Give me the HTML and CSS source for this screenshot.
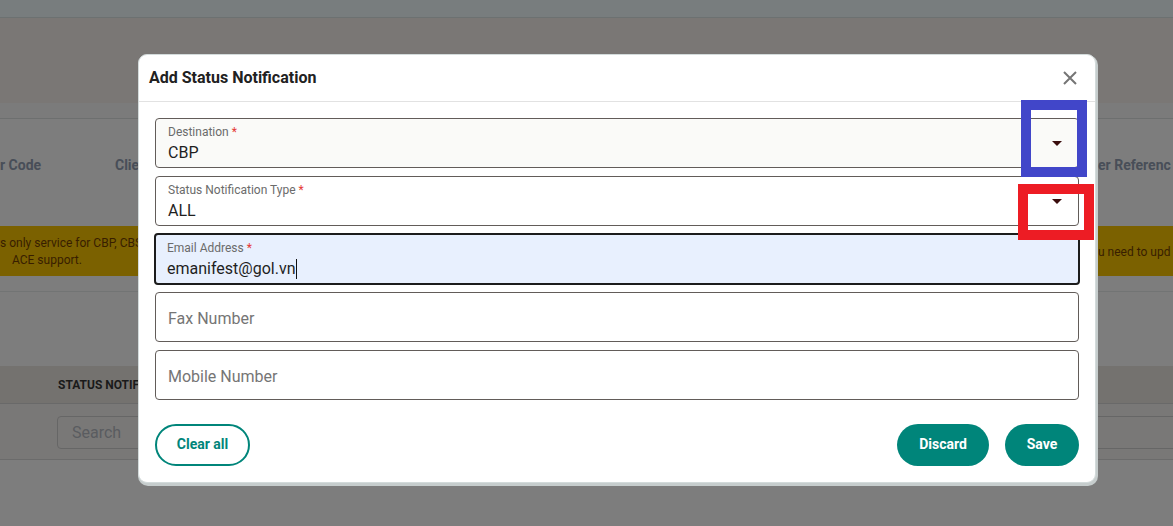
FILE: index.html
```html
<!DOCTYPE html>
<html lang="en">
<head>
<meta charset="utf-8">
<title>Add Status Notification</title>
<link rel="stylesheet" href="styles.css">
</head>
<body>
<div class="page">
  <div class="topbar"></div>
  <div class="band"></div>
  <div class="subband"></div>
  <div class="filters">
    <span class="col col-a">r Code</span>
    <span class="col col-b">Client</span>
    <span class="col col-c">er Referenc</span>
  </div>
  <div class="notice">
    <div class="notice-left">
      <div>s only service for CBP, CBSA</div>
      <div class="indent">ACE support.</div>
    </div>
    <div class="notice-right">u need to upd</div>
  </div>
  <div class="spacer"></div>
  <div class="thead"><span class="th">STATUS NOTIFICATION</span></div>
  <div class="searchrow"><div class="search">Search</div></div>
  <div class="rest"></div>
</div>

<div class="modal">
  <div class="modal-head">
    <h2 class="modal-title">Add Status Notification</h2>
    <svg class="close" width="14" height="14" viewBox="0 0 14 14"><path d="M1 1 L13 13 M13 1 L1 13" stroke="#757575" stroke-width="2" fill="none"/></svg>
  </div>
  <div class="modal-body">
    <div class="field select filled-bg">
      <div class="field-text">
        <div class="label">Destination <span class="req">*</span></div>
        <div class="value">CBP</div>
      </div>
      <span class="caret-down"></span>
    </div>
    <div class="field select">
      <div class="field-text">
        <div class="label">Status Notification Type <span class="req">*</span></div>
        <div class="value">ALL</div>
      </div>
      <span class="caret-down"></span>
    </div>
    <div class="field focused">
      <div class="field-text">
        <div class="label">Email Address <span class="req">*</span></div>
        <div class="value">emanifest@gol.vn<span class="cursor"></span></div>
      </div>
    </div>
    <div class="field empty">
      <div class="placeholder">Fax Number</div>
    </div>
    <div class="field empty">
      <div class="placeholder">Mobile Number</div>
    </div>
    <div class="actions">
      <button class="btn outline">Clear all</button>
      <div class="right-actions">
        <button class="btn solid discard">Discard</button>
        <button class="btn solid save">Save</button>
      </div>
    </div>
  </div>
</div>

<div class="mark mark-blue"></div>
<div class="mark mark-red"></div>
</body>
</html>
```

FILE: styles.css
```css
* { box-sizing: border-box; }
html, body { margin: 0; padding: 0; }
body {
  width: 1173px;
  height: 526px;
  overflow: hidden;
  background: #7d7d7d;
  font-family: Roboto, "Liberation Sans", sans-serif;
}
.page { display: flex; flex-direction: column; }
.topbar { height: 18px; background: #787d7e; border-bottom: 1px solid #6c7171; }
.band { height: 85px; background: #7a7775; }
.subband { height: 16px; background: #7b7b7b; border-bottom: 1px solid #6d6f6f; }
.filters {
  height: 107px;
  display: flex;
  align-items: center;
  padding-bottom: 15px;
  background: #7d7d7d;
  font-size: 14px;
  font-weight: 700;
  color: #484e58;
  white-space: nowrap;
}
.col-a { width: 115px; }
.col-b { width: 983px; }
.notice {
  height: 50px;
  background: #7b6100;
  display: flex;
  justify-content: space-between;
  align-items: center;
  font-size: 12px;
  line-height: 17px;
  color: #381e00;
  white-space: nowrap;
  padding-top: 2px;
}
.notice-left .indent { padding-left: 12px; }
.notice-right { margin-left: auto; width: 75px; }
.spacer { height: 75px; border-top: 1px solid #727474; margin-top: 15px; }
.thead {
  height: 38px;
  background: #74726f;
  border-bottom: 1px solid #696969;
  display: flex;
  align-items: center;
  padding-left: 58px;
  font-size: 12px;
  font-weight: 700;
  color: #1a1a1a;
}
.searchrow {
  height: 56px;
  background: #797877;
  border-bottom: 1px solid #6b6b6b;
  padding: 12px 0 0 57px;
}
.search {
  height: 33px;
  width: 1200px;
  border: 1px solid #666;
  border-radius: 4px;
  padding-left: 14px;
  font-size: 16px;
  line-height: 31px;
  color: #5a5c60;
}
.rest { flex: 1; }

/* Modal */
.modal {
  position: absolute;
  left: 138px;
  top: 54px;
  width: 958px;
  height: 429px;
  background: #fff;
  border-radius: 9px;
  border: 1px solid #d3dbdb;
  box-shadow: 1px 2px 0 1px #c6cdcd;
  display: flex;
  flex-direction: column;
}
.modal-head {
  height: 47px;
  border-bottom: 1px solid #e2e2e2;
  display: flex;
  align-items: center;
  justify-content: space-between;
  padding: 0 18px 1px 10px;
}
.modal-title {
  margin: 0;
  font-size: 16px;
  font-weight: 700;
  color: #212121;
}
.close { display: block; margin-top: 1px; }
.modal-body {
  padding: 16px 16px 0 16px;
  display: flex;
  flex-direction: column;
  gap: 8px;
}
.field {
  height: 50px;
  border: 1px solid #625c59;
  border-radius: 4px;
  background: #fff;
  display: flex;
  align-items: center;
  padding: 0 12px;
}
.field-text { flex: 1; align-self: flex-start; padding-top: 6px; }
.filled-bg { background: #fafaf8; }
.label {
  font-size: 12px;
  line-height: 14px;
  color: #6b6b6b;
}
.req { color: #e53935; }
.value {
  margin-top: 4px;
  font-size: 16px;
  line-height: 20px;
  color: #1f1f1f;
  display: flex;
  align-items: center;
}
.cursor {
  display: inline-block;
  width: 1px;
  height: 20px;
  background: #111;
  margin-left: 1px;
}
.caret-down {
  width: 0;
  height: 0;
  border-left: 5px solid transparent;
  border-right: 5px solid transparent;
  border-top: 5px solid #3a0d0d;
  margin-right: 4px;
}
.focused {
  border: 2px solid #1c1c1c;
  background: #e8f0fe;
  margin: -1px -1px;
  height: 52px;
  padding-left: 11px;
}
.focused .field-text { padding-top: 6px; }
.placeholder { font-size: 16px; color: #757575; padding-top: 2px; }
.actions {
  margin-top: 16px;
  display: flex;
  justify-content: space-between;
}
.right-actions { display: flex; gap: 16px; }
.btn {
  height: 42px;
  border-radius: 21px;
  font-family: Roboto, "Liberation Sans", sans-serif;
  font-size: 14px;
  font-weight: 700;
  padding: 0 0 2px 0;
  cursor: pointer;
}
.outline {
  width: 95px;
  background: #fff;
  border: 2px solid #00857a;
  color: #00857a;
}
.solid { background: #00857a; border: none; color: #fff; }
.discard { width: 92px; }
.save { width: 74px; }

/* annotation rectangles drawn over the screenshot */
.mark { position: absolute; border: 10px solid; }
.mark-blue { left: 1021px; top: 100px; width: 66px; height: 77px; border-color: #4146c9; }
.mark-red { left: 1018px; top: 184px; width: 76px; height: 56px; border-color: #ed1c24; }
```
